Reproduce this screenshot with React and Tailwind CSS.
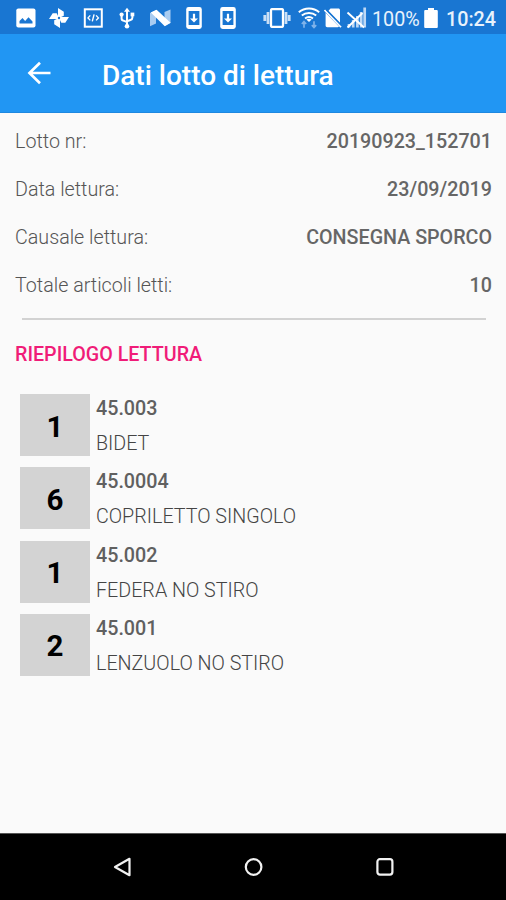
const details = [
  { label: "Lotto nr:", value: "20190923_152701" },
  { label: "Data lettura:", value: "23/09/2019" },
  { label: "Causale lettura:", value: "CONSEGNA SPORCO" },
  { label: "Totale articoli letti:", value: "10" },
];

const articles = [
  { code: "45.003", name: "BIDET", qty: 1 },
  { code: "45.0004", name: "COPRILETTO SINGOLO", qty: 6 },
  { code: "45.002", name: "FEDERA NO STIRO", qty: 1 },
  { code: "45.001", name: "LENZUOLO NO STIRO", qty: 2 },
];

function PictureIcon() {
  return (
    <svg width="20" height="20" viewBox="0 0 20 20" className="shrink-0">
      <rect x="0.3" y="0.5" width="19.2" height="19" rx="2" fill="#fff" />
      <path d="M3.500 15.500v-2.500l3-3 2.600 3 3.400-3.700 4 4.200v2z" fill="#1976d2" />
    </svg>
  );
}

function PinwheelIcon() {
  return (
    <svg width="20" height="20" viewBox="0 0 20 20" className="ml-[13px] shrink-0" fill="#fff">
      <path d="M9 10.500V0l5.800 3.700v4zM9.500 9H20l-3.700 5.800h-4zM11 9.500V20l-5.800-3.700v-4zM10.500 11H0l3.700-5.800h4z" />
      <circle cx="10" cy="10" r="1.2" fill="#1976d2" />
    </svg>
  );
}

function CodeIcon() {
  return (
    <svg width="20" height="20" viewBox="0 0 20 20" className="ml-[14px] shrink-0" fill="none" stroke="#fff">
      <rect x="1.8" y="1.3" width="17" height="17.4" strokeWidth="2" />
      <path d="M7.3 7.4L5 9.9l2.3 2.5M13.1 7.4l2.3 2.5-2.3 2.5M11.1 6.4l-1.8 7" strokeWidth="1.4" />
    </svg>
  );
}

function UsbIcon() {
  return (
    <svg width="16" height="22" viewBox="0 0 16 22" className="ml-[16px] shrink-0" fill="none" stroke="#fff" strokeWidth="2">
      <path d="M8 3v16M2.6 8v3.4c0 1.3.7 2 2 2.3L8 15.2M13.4 8v2.7c0 1.3-.7 1.9-2 2.3L8 14.2" />
      <path d="M5 4.8L8 0.8l3 4z" fill="#fff" stroke="none" />
      <circle cx="8" cy="19.2" r="2.3" fill="#fff" stroke="none" />
      <circle cx="2.6" cy="7.6" r="2.1" fill="#fff" stroke="none" />
      <path d="M11.6 5.6h3.7v3.7h-3.7z" fill="#fff" stroke="none" />
    </svg>
  );
}

function NougatIcon() {
  return (
    <svg width="21" height="18" viewBox="0 0 21 18" className="ml-[15px] shrink-0">
      <path d="M0 4l6-3v13.500L0 17.200zM14.500 3L20.500 0.500V14l-6 3z" fill="#a9ccf1" />
      <path d="M0.800 3.500L6.600 0.700 20.600 13.700 14.800 17.300z" fill="#fff" />
    </svg>
  );
}

function DownloadIcon({ className }) {
  return (
    <svg width="16" height="22" viewBox="0 0 16 22" className={className}>
      <rect x="0.2" y="0" width="15.600" height="22" rx="2.400" fill="#fff" />
      <path d="M2.600 4h10.800v14H2.600z" fill="#1976d2" />
      <path d="M6.900 6.800h2.200v4.600H12l-4 4.200-4-4.200h2.900z" fill="#fff" />
    </svg>
  );
}

function VibrateIcon() {
  return (
    <svg width="28" height="20" viewBox="0 0 28 20" className="ml-[27px] shrink-0">
      <path d="M1.800 7v6M5 4v12M26.200 7v6M23 4v12" stroke="#c9dff6" strokeWidth="2.800" />
      <rect x="8" y="1.100" width="12" height="17.800" rx="1.200" fill="none" stroke="#fff" strokeWidth="2.300" />
    </svg>
  );
}

function WifiIcon() {
  return (
    <svg width="22" height="22" viewBox="0 0 22 22" className="ml-[7px] shrink-0" fill="none" stroke="#fff">
      <path d="M0.800 5.300C6.500 0.300 15.500 0.300 21.200 5.300M3.800 8.500c4-3.400 10.400-3.400 14.400 0M7 11.500c2.400-1.800 5.600-1.800 8 0" strokeWidth="1.900" />
      <path d="M8.300 12.600c1.800-1 3.600-1 5.400 0L11 15z" fill="#fff" stroke="none" />
      <path d="M6 20.800v-6M3.800 17L6 14.600 8.200 17M16 14.300v6M13.800 18.100l2.200 2.400 2.200-2.400" stroke="#7fb3ea" strokeWidth="1.700" />
    </svg>
  );
}

function NoSimIcon() {
  return (
    <svg width="18" height="20" viewBox="0 0 18 20" className="ml-[4px] shrink-0">
      <path d="M6.500 0.500h7.800c1 0 1.700.7 1.700 1.700v13L4.300 2.900zM1.600 4.700L15 18.500c-.3.600-.8.800-1.400.8H3.300c-1 0-1.700-.7-1.700-1.700z" fill="#fff" />
      <path d="M0.500 2.100l16.500 17" stroke="#fff" strokeWidth="1.700" />
      <path d="M2 1.300l15.500 16" stroke="#1976d2" strokeWidth="1.400" />
    </svg>
  );
}

function SignalIcon() {
  return (
    <svg width="21" height="22" viewBox="0 0 21 22" className="ml-[4px] shrink-0">
      <path d="M3 20.500v-3.500M7.200 20.500v-7.500M11.400 20.500V9M15.200 20.500V5M18.700 20.500V0.500" stroke="#bdd8f5" strokeWidth="2.700" />
      <path d="M1.500 5.500l16.500 15M16.500 6L1.500 20.500" stroke="#fff" strokeWidth="1.900" />
    </svg>
  );
}

function BatteryIcon() {
  return (
    <svg width="14" height="20" viewBox="0 0 14 20" className="ml-[4px] shrink-0">
      <path d="M4 0h6v2h2.500c.8 0 1.300.5 1.300 1.300v15.400c0 .8-.5 1.300-1.300 1.300h-11c-.8 0-1.300-.5-1.300-1.300V3.300C.2 2.500.7 2 1.500 2H4z" fill="#fff" />
    </svg>
  );
}

function StatusBar() {
  return (
    <div className="flex h-[34px] items-center bg-[#1976d2] pl-4 pt-px text-[19.7px] leading-none text-[#e8f2fc]">
      <PictureIcon />
      <PinwheelIcon />
      <CodeIcon />
      <UsbIcon />
      <NougatIcon />
      <DownloadIcon className="ml-[15px] shrink-0" />
      <DownloadIcon className="ml-[18px] shrink-0" />
      <VibrateIcon />
      <WifiIcon />
      <NoSimIcon />
      <SignalIcon />
      <span className="ml-[5px] w-[48px] pt-[4px]">100%</span>
      <BatteryIcon />
      <span className="ml-[8px] pt-[4px] font-medium">10:24</span>
    </div>
  );
}

function AppBar() {
  return (
    <header className="flex h-[79px] items-center border-b border-[#1e88e0] bg-[#2196f3] pl-[27px] text-white">
      <button className="shrink-0" aria-label="Indietro">
        <svg width="24" height="24" viewBox="0 0 24 24" fill="none" stroke="currentColor" strokeWidth="2.7">
          <path d="M23.500 12H2.500M13 1.800L2.500 12 13 22.200" />
        </svg>
      </button>
      <h1 className="ml-[51px] pt-[5px] text-[28px] leading-none font-medium">Dati lotto di lettura</h1>
    </header>
  );
}

function NavBar() {
  return (
    <nav className="flex h-[67px] items-center border-t border-[#555] bg-black pl-[112px]">
      <svg width="20" height="20" viewBox="0 0 20 20" fill="none" stroke="#f2f2f2" strokeWidth="2.200" strokeLinejoin="round">
        <path d="M17.500 1.800v16.400L3 10z" />
      </svg>
      <svg width="20" height="20" viewBox="0 0 20 20" className="ml-[112px]" fill="none" stroke="#f2f2f2" strokeWidth="2.200">
        <circle cx="9.600" cy="10" r="7.800" />
      </svg>
      <svg width="20" height="20" viewBox="0 0 20 20" className="ml-[111px]" fill="none" stroke="#f2f2f2" strokeWidth="2.200">
        <rect x="2.400" y="2.200" width="15" height="15.400" rx="2.500" />
      </svg>
    </nav>
  );
}

export default function App() {
  return (
    <div className="flex h-[900px] w-[506px] flex-col overflow-hidden bg-[#fafafa] font-[Roboto,sans-serif]">
      <StatusBar />
      <AppBar />

      <main className="flex-1">
        <dl className="pt-[5px] pr-[14px] pl-[15px] text-[19.7px]">
          {details.map((d) => (
            <div key={d.label} className="flex h-[47.8px] items-center justify-between">
              <dt className="font-light text-[#555]">{d.label}</dt>
              <dd className="font-medium text-[#666]">{d.value}</dd>
            </div>
          ))}
        </dl>

        <hr className="mt-[9px] mr-[20px] ml-[22px] border-t-2 border-[#d2d2d2]" />

        <h2 className="mt-[20px] ml-[15px] text-[19.7px] leading-[30px] font-medium text-[#f01c78]">
          RIEPILOGO LETTURA
        </h2>

        <ul className="mt-[24px] ml-[20px] flex flex-col gap-[11.200px]">
          {articles.map((a) => (
            <li key={a.code} className="flex h-[62px]">
              <div className="flex w-[70px] items-center justify-center bg-[#d3d3d3] pt-[3px] text-[29.5px] font-bold text-black">
                {a.qty}
              </div>
              <div className="ml-[6px] flex flex-col text-[19.7px]">
                <span className="h-[35px] shrink-0 leading-[30px] font-medium text-[#606060]">{a.code}</span>
                <span className="leading-[30px] font-light text-[#444]">{a.name}</span>
              </div>
            </li>
          ))}
        </ul>
      </main>

      <NavBar />
    </div>
  );
}
